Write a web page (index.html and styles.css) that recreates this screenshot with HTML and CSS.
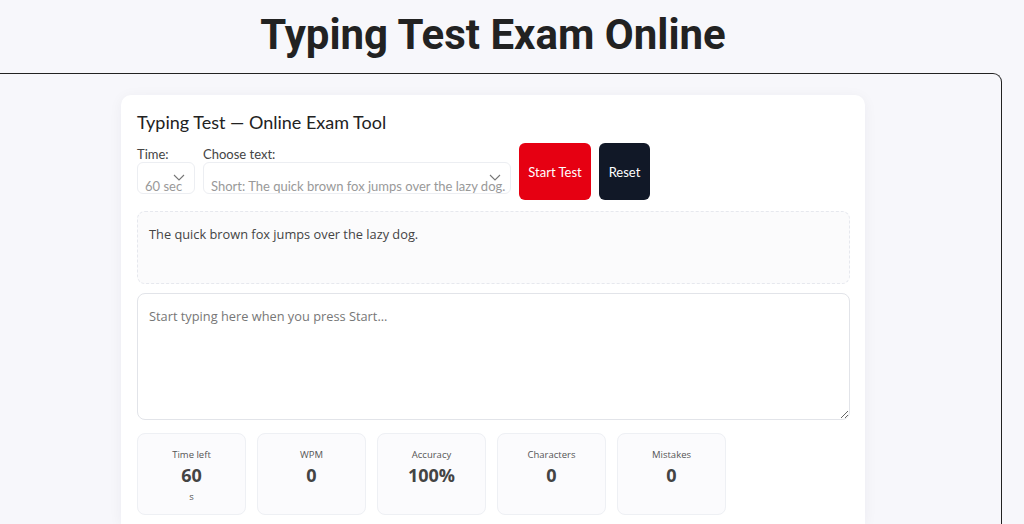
FILE: index.html
```html
<!DOCTYPE html>
<html>
<head>
<meta charset="utf-8">
<link rel="stylesheet" href="styles.css">
</head>
<body>
<main class="page">
  <h1 class="title">Typing Test Exam Online</h1>
  <section class="frame">
    <div class="card">
      <h2 class="card-title">Typing Test — Online Exam Tool</h2>
      <div class="controls">
        <div class="field">
          <span class="label">Time:</span>
          <div class="select select-time">
            <span class="select-text">60 sec</span>
            <svg class="chev" width="12" height="10" viewBox="0 0 12 10"><path d="M1 2 L6 7 L11 2" fill="none" stroke="#777" stroke-width="1.1"/></svg>
          </div>
        </div>
        <div class="field">
          <span class="label">Choose text:</span>
          <div class="select select-text-choice">
            <span class="select-text">Short: The quick brown fox jumps over the lazy dog.</span>
            <svg class="chev" width="12" height="10" viewBox="0 0 12 10"><path d="M1 2 L6 7 L11 2" fill="none" stroke="#777" stroke-width="1.1"/></svg>
          </div>
        </div>
        <button class="btn btn-start">Start Test</button>
        <button class="btn btn-reset">Reset</button>
      </div>
      <div class="passage">The quick brown fox jumps over the lazy dog.</div>
      <textarea class="input" placeholder="Start typing here when you press Start..."></textarea>
      <div class="stats">
        <div class="stat"><span class="stat-label">Time left</span><span class="stat-value">60</span><span class="stat-unit">s</span></div>
        <div class="stat"><span class="stat-label">WPM</span><span class="stat-value">0</span></div>
        <div class="stat"><span class="stat-label">Accuracy</span><span class="stat-value">100%</span></div>
        <div class="stat"><span class="stat-label">Characters</span><span class="stat-value">0</span></div>
        <div class="stat"><span class="stat-label">Mistakes</span><span class="stat-value">0</span></div>
      </div>
    </div>
  </section>
</main>
</body>
</html>
```
FILE: styles.css
```css
html, body {
  margin: 0;
  padding: 0;
  background: #f7f7fb;
  overflow: hidden;
}
.page {
  width: 1018px;
  margin-left: -16px;
}
.title {
  margin: 0;
  padding-top: 12px;
  height: 73px;
  box-sizing: border-box;
  text-align: center;
  font-family: Roboto, "Liberation Sans", sans-serif;
  font-weight: 700;
  font-size: 42px;
  line-height: 46px;
  color: #222;
}
.frame {
  border: 1.5px solid #222;
  border-bottom: none;
  border-radius: 9px 9px 0 0;
  padding-top: 21px;
  height: 451px;
  box-sizing: border-box;
}
.card {
  width: 744px;
  margin: 0 auto;
  background: #fff;
  border-radius: 10px 10px 0 0;
  box-shadow: 0 2px 14px rgba(20, 20, 60, 0.05);
  padding: 16px 15px 0 16px;
  box-sizing: border-box;
  height: 429px;
}
.card-title {
  margin: 0 0 12px 0;
  font-family: Lato, "Open Sans", sans-serif;
  font-weight: 400;
  font-size: 18px;
  line-height: 22px;
  color: #222;
}
.controls {
  display: flex;
  align-items: flex-start;
  gap: 8px;
  margin-top: -2px;
}
.field {
  display: flex;
  flex-direction: column;
  padding-top: 4px;
}
.label {
  font-family: Lato, "Open Sans", sans-serif;
  font-size: 13px;
  line-height: 15px;
  color: #444;
}
.select {
  position: relative;
  height: 32px;
  box-sizing: border-box;
  border: 1px solid #eceef2;
  border-radius: 6px;
  overflow: hidden;
  padding: 13px 8px 0 7px;
}
.select-time { width: 58px; }
.select-text-choice { width: 308px; }
.select-text {
  display: block;
  white-space: nowrap;
  font-family: Lato, "Open Sans", sans-serif;
  font-size: 13px;
  line-height: 20px;
  color: #999;
}
.chev {
  position: absolute;
  right: 9px;
  top: 10px;
}
.btn {
  height: 57px;
  border: none;
  border-radius: 6px;
  color: #fff;
  font-family: Lato, "Open Sans", sans-serif;
  font-size: 13px;
  padding: 0 6px;
  white-space: nowrap;
}
.btn-start { background: #e60012; width: 72px; }
.btn-reset { background: #111827; width: 51px; }
.passage {
  margin-top: 11px;
  height: 73px;
  box-sizing: border-box;
  border: 1px dashed #e6e8ee;
  border-radius: 8px;
  background: #fbfbfc;
  padding: 13px 11px;
  font-family: "Open Sans", sans-serif;
  font-size: 12.8px;
  line-height: 18px;
  color: #444;
}
.input {
  display: block;
  width: 100%;
  margin-top: 9px;
  height: 127px;
  box-sizing: border-box;
  border: 1px solid #e2e4e9;
  border-radius: 8px;
  padding: 12px 11px;
  font-family: "Open Sans", sans-serif;
  font-size: 12.8px;
  line-height: 20px;
  color: #333;
  resize: vertical;
  background: #fff;
}
.input::placeholder { color: #777; }
.stats {
  display: flex;
  gap: 11px;
  margin-top: 13px;
}
.stat {
  width: 109px;
  height: 82px;
  box-sizing: border-box;
  border: 1px solid #eef0f4;
  border-radius: 8px;
  background: #fbfbfd;
  display: flex;
  flex-direction: column;
  align-items: center;
  padding-top: 15px;
  font-family: "Open Sans", sans-serif;
  color: #444;
}
.stat-label {
  font-size: 9.5px;
  line-height: 12px;
  color: #555;
}
.stat-value {
  font-size: 18px;
  font-weight: 700;
  line-height: 22px;
  margin-top: 3px;
  color: #444;
}
.stat-unit {
  font-size: 9.5px;
  line-height: 12px;
  margin-top: 5px;
  color: #555;
}
```
